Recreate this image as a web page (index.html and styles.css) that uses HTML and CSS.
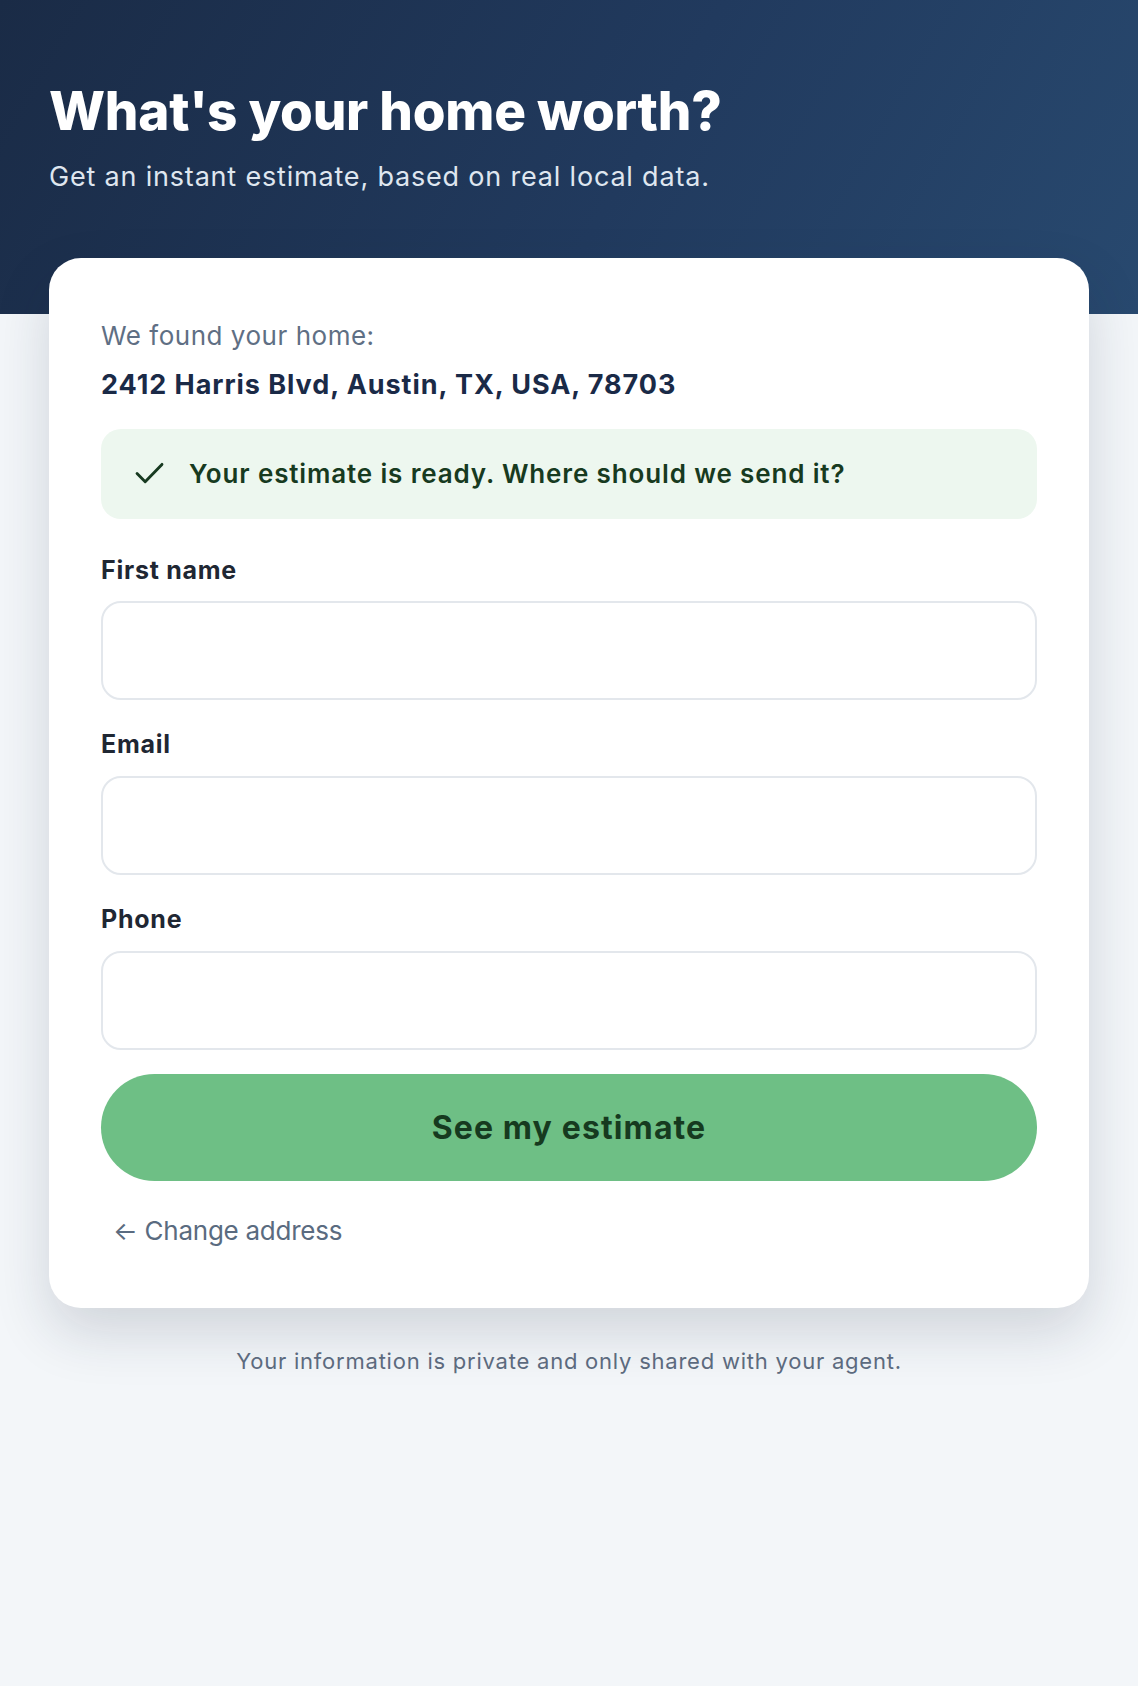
FILE: index.html
```html
<!DOCTYPE html>
<html lang="en">
  <head>
    <meta charset="UTF-8" />
    <title>What's your home worth?</title>
    <link rel="stylesheet" href="styles.css">
  </head>
  <body>
    <main class="page">
      <header class="hero">
        <h1>What's your home worth?</h1>
        <p class="hero-sub">Get an instant estimate, based on real local data.</p>
      </header>

      <section class="lead-card" aria-labelledby="found-title">
        <p id="found-title" class="found-label">We found your home:</p>
        <p class="found-address">2412 Harris Blvd, Austin, TX, USA, 78703</p>

        <div class="ready-note" role="status">
          <svg class="ready-icon" viewBox="0 0 30 24" aria-hidden="true">
            <polyline points="2,12 10.5,20.5 28,2.5" />
          </svg>
          <span>Your estimate is ready. Where should we send it?</span>
        </div>

        <form id="leadForm" class="lead-form" autocomplete="off">
          <div class="field">
            <label for="firstName">First name</label>
            <input type="text" id="firstName" class="field-input" />
          </div>
          <div class="field">
            <label for="email">Email</label>
            <input type="email" id="email" class="field-input" />
          </div>
          <div class="field">
            <label for="phone">Phone</label>
            <input type="tel" id="phone" class="field-input" />
          </div>
          <button type="submit" class="submit-btn">See my estimate</button>
        </form>

        <a href="#" class="back-link">← Change address</a>
      </section>

      <p class="privacy-note">Your information is private and only shared with your agent.</p>
    </main>
  </body>
</html>
```

FILE: styles.css
```css
body {
  margin: 0;
  background: #f3f6f9;
  font-family: Inter, "Noto Sans", Arial, sans-serif;
}
.page {
  min-height: 100vh;
  padding-bottom: 80px;
  box-sizing: border-box;
  background:
    linear-gradient(120deg, #1a2b46 0%, #213a5e 55%, #28496f 100%) top / 100% 314px no-repeat,
    #f3f6f9;
}
.hero {
  max-width: 1040px;
  margin: 0 auto;
  padding: 80px 0 0 0;
  color: #fff;
}
.hero h1 {
  margin: 0;
  font-size: 53px;
  line-height: 1.2;
  font-weight: 800;
  letter-spacing: -0.005em;
}
.hero-sub {
  margin: 14px 0 0 0;
  font-size: 27px;
  line-height: 1.4;
  color: #dfe6ef;
  letter-spacing: 0.03em;
}
.lead-card {
  max-width: 1040px;
  margin: 63px auto 0 auto;
  padding: 60px 52px 59px 52px;
  box-sizing: border-box;
  background: #fff;
  border-radius: 32px;
  box-shadow: 0 24px 56px rgba(22, 36, 62, 0.16);
}
.found-label {
  margin: 0;
  font-size: 26px;
  line-height: 1.4;
  color: #5f6f84;
  letter-spacing: 0.02em;
}
.found-address {
  margin: 11px 0 0 0;
  font-size: 27px;
  line-height: 1.4;
  font-weight: 700;
  color: #1a2a47;
  letter-spacing: 0.035em;
}
.ready-note {
  margin-top: 25px;
  height: 90px;
  box-sizing: border-box;
  padding: 0 24px 0 34px;
  display: flex;
  align-items: center;
  gap: 25px;
  background: #edf7ef;
  border-radius: 20px;
  font-size: 26px;
  font-weight: 600;
  color: #173a20;
  letter-spacing: 0.033em;
}
.ready-icon {
  width: 29px;
  height: 23px;
  flex: none;
}
.ready-icon polyline {
  fill: none;
  stroke: #173a20;
  stroke-width: 3;
  stroke-linecap: round;
  stroke-linejoin: round;
}
.lead-form {
  margin-top: 35px;
  display: flex;
  flex-direction: column;
}
.field {
  display: flex;
  flex-direction: column;
  gap: 14px;
  margin-bottom: 28px;
}
.field label {
  font-size: 25px;
  line-height: 1.35;
  font-weight: 700;
  color: #1f2733;
  letter-spacing: 0.03em;
}
.field-input {
  height: 99px;
  box-sizing: border-box;
  border: 2px solid #e3e7ec;
  border-radius: 20px;
  padding: 0 24px;
  font-size: 26px;
  font-family: inherit;
  background: #fff;
}
.field:last-of-type {
  margin-bottom: 24px;
}
.submit-btn {
  height: 107px;
  border: none;
  border-radius: 999px;
  background: #6ebf85;
  color: #163a1f;
  font-family: inherit;
  font-size: 32px;
  font-weight: 700;
  letter-spacing: 0.035em;
  cursor: pointer;
}
.submit-btn:hover {
  background: #62b479;
}
.back-link {
  display: inline-block;
  margin-top: 32px;
  padding-left: 12px;
  font-size: 26px;
  line-height: 1.4;
  color: #5a6b80;
  text-decoration: none;
  letter-spacing: -0.01em;
}
.privacy-note {
  margin: 38px 0 0 0;
  text-align: center;
  font-size: 22px;
  line-height: 1.4;
  color: #5c6a7e;
  letter-spacing: 0.035em;
}
```
